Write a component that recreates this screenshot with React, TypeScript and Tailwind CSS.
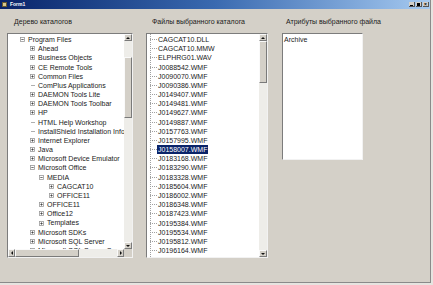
import React from "react";

type Node = { l: number; t: string; e: "+" | "-" | "" };

const tree: Node[] = [
  { l: 0, t: "Program Files", e: "-" },
  { l: 1, t: "Ahead", e: "+" },
  { l: 1, t: "Business Objects", e: "+" },
  { l: 1, t: "CE Remote Tools", e: "+" },
  { l: 1, t: "Common Files", e: "+" },
  { l: 1, t: "ComPlus Applications", e: "" },
  { l: 1, t: "DAEMON Tools Lite", e: "+" },
  { l: 1, t: "DAEMON Tools Toolbar", e: "+" },
  { l: 1, t: "HP", e: "+" },
  { l: 1, t: "HTML Help Workshop", e: "" },
  { l: 1, t: "InstallShield Installation Information", e: "" },
  { l: 1, t: "Internet Explorer", e: "+" },
  { l: 1, t: "Java", e: "+" },
  { l: 1, t: "Microsoft Device Emulator", e: "+" },
  { l: 1, t: "Microsoft Office", e: "-" },
  { l: 2, t: "MEDIA", e: "-" },
  { l: 3, t: "CAGCAT10", e: "+" },
  { l: 3, t: "OFFICE11", e: "+" },
  { l: 2, t: "OFFICE11", e: "+" },
  { l: 2, t: "Office12", e: "+" },
  { l: 2, t: "Templates", e: "+" },
  { l: 1, t: "Microsoft SDKs", e: "+" },
  { l: 1, t: "Microsoft SQL Server", e: "+" },
  { l: 1, t: "Microsoft SQL Server Compact Edition", e: "+" },
];

const files = [
  "CAGCAT10.DLL",
  "CAGCAT10.MMW",
  "ELPHRG01.WAV",
  "J0088542.WMF",
  "J0090070.WMF",
  "J0090386.WMF",
  "J0149407.WMF",
  "J0149481.WMF",
  "J0149627.WMF",
  "J0149887.WMF",
  "J0157763.WMF",
  "J0157995.WMF",
  "J0158007.WMF",
  "J0183168.WMF",
  "J0183290.WMF",
  "J0183328.WMF",
  "J0185604.WMF",
  "J0186002.WMF",
  "J0186348.WMF",
  "J0187423.WMF",
  "J0195384.WMF",
  "J0195534.WMF",
  "J0195812.WMF",
  "J0196164.WMF",
  "J0196525.WMF",
];

const levelPad: Record<number, string> = {
  0: "pl-[12px]",
  1: "pl-[22px]",
  2: "pl-[31px]",
  3: "pl-[41px]",
};

function Expander({ e }: { e: "+" | "-" | "" }) {
  if (e === "") {
    return (
      <svg width="5" height="5" className="shrink-0">
        <line x1="1" y1="2.5" x2="5" y2="2.5" stroke="#9a9a9a" strokeWidth="0.8" />
      </svg>
    );
  }
  return (
    <svg width="5" height="5" className="shrink-0">
      <rect x="0.5" y="0.5" width="4" height="4" fill="#fff" stroke="#9a9a9a" strokeWidth="0.8" />
      <line x1="1.3" y1="2.5" x2="3.7" y2="2.5" stroke="#333" strokeWidth="0.7" />
      {e === "+" && <line x1="2.5" y1="1.3" x2="2.5" y2="3.7" stroke="#333" strokeWidth="0.7" />}
    </svg>
  );
}

function Arrow({ dir }: { dir: "up" | "down" | "left" | "right" }) {
  const pts =
    dir === "up"
      ? "0,3 2,1 4,3"
      : dir === "down"
      ? "0,1 2,3 4,1"
      : dir === "left"
      ? "3,0 1,2 3,4"
      : "1,0 3,2 1,4";
  return (
    <svg width="4" height="4">
      <polygon points={pts} fill="#111" />
    </svg>
  );
}

function Btn({ dir, cls }: { dir: "up" | "down" | "left" | "right"; cls: string }) {
  return (
    <div
      className={`${cls} shrink-0 bg-[#d4d0c8] border-t border-l border-t-[#fafafa] border-l-[#fafafa] border-b border-r border-b-[#7a7a7a] border-r-[#7a7a7a] flex items-center justify-center`}
    >
      <Arrow dir={dir} />
    </div>
  );
}

function Thumb({ cls }: { cls: string }) {
  return (
    <div
      className={`${cls} shrink-0 bg-[#d4d0c8] border-t border-l border-t-[#fafafa] border-l-[#fafafa] border-b border-r border-b-[#7a7a7a] border-r-[#7a7a7a]`}
    />
  );
}

export default function App() {
  const font = { fontFamily: '"Liberation Sans", Arial, sans-serif' };
  return (
    <div className="w-[433px] h-[285px] bg-[#e6e4e0] overflow-hidden" style={font}>
      <div className="w-[431px] h-[283px] bg-[#d4d0c8] border-r border-b border-r-[#8a8a8a] border-b-[#8a8a8a] flex flex-col">
        {/* title bar */}
        <div className="h-[9px] w-[430px] shrink-0 bg-gradient-to-r from-[#0a246a] via-[#3a6ab0] to-[#a6caf0] flex items-center">
          <div className="ml-[2px] w-[5px] h-[5px] bg-[#d8c890] border border-[#6a5a30]" />
          <span className="ml-[3px] text-[5px] leading-[9px] font-bold text-white">Form1</span>
          <div className="ml-auto mr-[1px] flex gap-[1px]">
            <div className="w-[6px] h-[5px] bg-[#d4d0c8] border-r border-b border-[#555] flex items-end justify-center">
              <div className="w-[3px] h-[1px] bg-black mb-[0.5px]" />
            </div>
            <div className="w-[6px] h-[5px] bg-[#d4d0c8] border-r border-b border-[#555] flex items-center justify-center">
              <div className="w-[3px] h-[3px] border border-black border-t-2" />
            </div>
            <div className="w-[6px] h-[5px] bg-[#d4d0c8] border-r border-b border-[#555] flex items-center justify-center text-[5px] leading-[5px] font-bold text-black">
              ×
            </div>
          </div>
        </div>

        {/* body */}
        <div className="flex pl-[7px] pt-[8px] text-[7px] text-[#1a1a1a]">
          {/* tree panel */}
          <div className="w-[126px] flex flex-col">
            <div className="h-[10px] leading-[10px] pl-[7px] whitespace-nowrap">Дерево каталогов</div>
            <div className="mt-[6px] h-[225px] bg-white border border-t-[#7c7c7c] border-l-[#7c7c7c] border-b-[#f2f2f2] border-r-[#f2f2f2] flex flex-col">
              <div className="flex-1 flex min-h-0">
                <div className="flex-1 overflow-hidden pt-[1px]">
                  {tree.map((n, i) => (
                    <div
                      key={i}
                      className={`${levelPad[n.l]} h-[9.18px] flex items-center whitespace-nowrap leading-[9.18px]`}
                    >
                      <Expander e={n.e} />
                      <span className="ml-[3px]">{n.t}</span>
                    </div>
                  ))}
                </div>
                <div className="w-[8px] flex flex-col bg-[#eeede9]">
                  <Btn dir="up" cls="h-[7px]" />
                  <div className="h-[16px]" />
                  <Thumb cls="h-[61px]" />
                  <div className="flex-1" />
                  <Btn dir="down" cls="h-[7px]" />
                </div>
              </div>
              <div className="h-[8px] flex bg-[#eeede9]">
                <Btn dir="left" cls="w-[7px]" />
                <Thumb cls="w-[64px]" />
                <div className="flex-1" />
                <Btn dir="right" cls="w-[7px]" />
                <div className="w-[8px] bg-[#d4d0c8]" />
              </div>
            </div>
          </div>

          {/* files panel */}
          <div className="ml-[13px] w-[122px] flex flex-col">
            <div className="h-[10px] leading-[10px] pl-[6px] whitespace-nowrap">Файлы выбранного каталога</div>
            <div className="mt-[6px] h-[225px] bg-white border border-t-[#7c7c7c] border-l-[#7c7c7c] border-b-[#f2f2f2] border-r-[#f2f2f2] flex">
              <div className="flex-1 overflow-hidden pt-[1px] relative">
                <div className="absolute left-[3px] top-0 bottom-0 border-l border-dotted border-[#a0a0a0]" />
                {files.map((f, i) => (
                  <div key={i} className="h-[9.18px] flex items-center whitespace-nowrap pl-[3px]">
                    <div className="w-[7px] border-t border-dotted border-[#a0a0a0]" />
                    <span
                      className={
                        i === 12
                          ? "bg-[#0a246a] text-white px-[1px] leading-[9px]"
                          : "px-[1px] leading-[9px]"
                      }
                    >
                      {f}
                    </span>
                  </div>
                ))}
              </div>
              <div className="w-[8px] flex flex-col bg-[#eeede9]">
                <Btn dir="up" cls="h-[7px]" />
                <Thumb cls="h-[42px]" />
                <div className="flex-1" />
                <Btn dir="down" cls="h-[7px]" />
              </div>
            </div>
          </div>

          {/* attributes panel */}
          <div className="ml-[14px] w-[81px] flex flex-col">
            <div className="h-[10px] leading-[10px] pl-[4px] whitespace-nowrap">Атрибуты выбранного файла</div>
            <div className="mt-[6px] h-[127px] bg-white border border-t-[#7c7c7c] border-l-[#7c7c7c] border-b-[#f2f2f2] border-r-[#f2f2f2] pt-[1px] pl-[1px]">
              <div className="h-[9.18px] leading-[9.18px]">Archive</div>
            </div>
          </div>
        </div>
      </div>
    </div>
  );
}
